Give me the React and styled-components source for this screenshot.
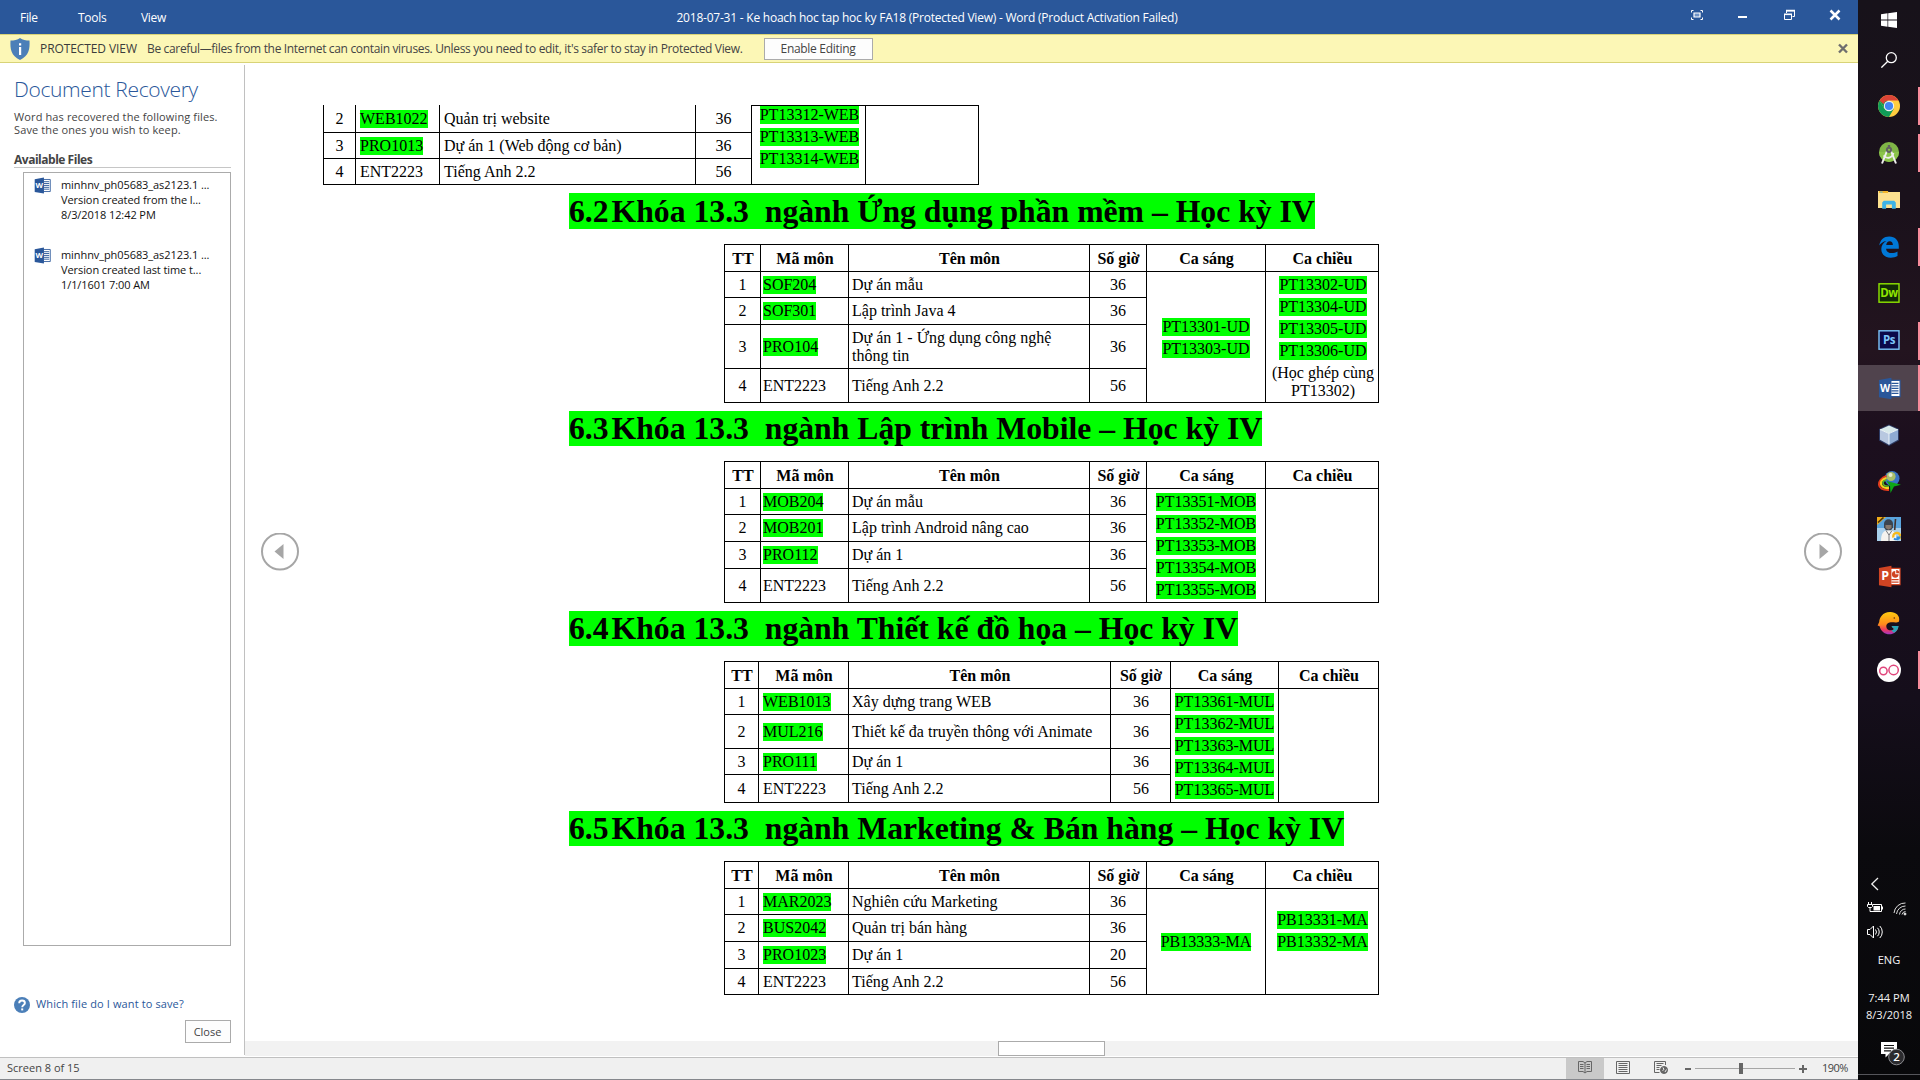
import React from "react";
import styled, { createGlobalStyle } from "styled-components";

const Global = createGlobalStyle`
  * { box-sizing: border-box; }
  body { margin: 0; overflow: hidden; background: #fff; }
`;

const ui = `"Open Sans", "Noto Sans", sans-serif`;
const serif = `"Liberation Serif", "Times New Roman", serif`;

const Screen = styled.div`
  display: flex;
  width: 1920px;
  height: 1080px;
  font-family: ${ui};
  font-size: 12px;
  white-space: nowrap;
`;
const WordWindow = styled.div`
  display: flex;
  flex-direction: column;
  width: 1858px;
  background: #fff;
`;

/* title bar */
const TitleBar = styled.header`
  display: grid;
  grid-template-columns: 1fr auto 1fr;
  height: 34px;
  padding-right: 4px;
  background: #2a579a;
  color: #fff;
  line-height: 36px;
`;
const Menu = styled.nav`
  display: flex;
  padding-left: 20px;
  letter-spacing: -0.3px;
`;
const MenuItem = styled.span`
  width: ${(p) => p.$w}px;
`;
const Title = styled.div`
  letter-spacing: -0.225px;
`;
const WindowButtons = styled.div`
  display: flex;
  justify-content: flex-end;
  padding: 7px 11px 0 0;
  gap: 30px;
`;

/* protected view banner */
const Banner = styled.div`
  display: flex;
  align-items: center;
  height: 29px;
  padding: 0 9px 0 10px;
  background: #fcf7b6;
  border-top: 1px solid #d8d377;
  border-bottom: 1px solid #d8d377;
  color: #444;
`;
const BannerTitle = styled.span`
  width: 107px;
  margin-left: 10px;
  letter-spacing: -0.09px;
  color: #3b3b3b;
`;
const BannerText = styled.span`
  width: 617px;
  letter-spacing: -0.34px;
`;
const PlainButton = styled.button`
  width: ${(p) => p.$w}px;
  height: ${(p) => p.$h}px;
  padding: 0 1px 0 0;
  border: 1px solid #ababab;
  background: #fdfdfd;
  color: #444;
  font: ${(p) => p.$size}px ${ui};
  letter-spacing: ${(p) => p.$ls || 0}px;
`;
const Spacer = styled.div`
  flex: 1;
`;

/* body */
const Body = styled.div`
  display: flex;
  height: 994px;
`;
const Panel = styled.aside`
  display: flex;
  flex-direction: column;
  width: 245px;
  height: 990px;
  margin-top: 2px;
  padding: 9px 13px 0 14px;
  border-right: 1px solid #c0c0c0;
  font-size: 11px;
`;
const PanelTitle = styled.h1`
  margin: 0;
  font-size: 21px;
  font-weight: 300;
  line-height: 30px;
  letter-spacing: -0.35px;
  color: #2a579a;
`;
const PanelNote = styled.p`
  margin: 6px 0 0;
  line-height: 13px;
  letter-spacing: 0.12px;
  color: #444;
`;
const PanelSubtitle = styled.h2`
  height: 20px;
  margin: 12px 0 0;
  border-bottom: 1px solid #c6c6c6;
  font-size: 12px;
  font-weight: 700;
  line-height: 24px;
  letter-spacing: -0.48px;
  color: #444;
`;
const FileList = styled.ul`
  display: flex;
  flex-direction: column;
  gap: 25px;
  height: 774px;
  margin: 4px 0 0 9px;
  padding: 4px 0 0 10px;
  border: 1px solid #ababab;
  list-style: none;
`;
const FileItem = styled.li`
  display: flex;
  gap: 10px;
  line-height: 15px;
  letter-spacing: -0.08px;
  color: #111;
`;
const HelpLink = styled.a`
  display: flex;
  align-items: center;
  gap: 6px;
  height: 16px;
  margin-top: 51px;
  letter-spacing: 0.12px;
  line-height: 14px;
  color: #2a579a;
  & > span { margin-top: -2px; }
`;
const PanelFooter = styled.div`
  display: flex;
  justify-content: flex-end;
  margin-top: 7px;
`;

const Reader = styled.main`
  display: flex;
  flex-direction: column;
  flex: 1;
`;
const Spread = styled.div`
  display: grid;
  grid-template-columns: 78px 1fr 53px;
  align-items: center;
  height: 978px;
  padding-right: 1px;
`;
const PageTurn = styled.div`
  display: flex;
  padding-left: ${(p) => p.$pad}px;
`;
const Page = styled.article`
  align-self: start;
  padding-top: 42px;
  font: 16px/18px ${serif};
  color: #000;
`;
const ScrollTrack = styled.div`
  height: 15px;
  padding-left: 753px;
  background: #f2f2f2;
`;
const ScrollThumb = styled.div`
  width: 107px;
  height: 15px;
  border: 1px solid #ababab;
  background: #fff;
`;

/* document content */
const Heading = styled.h2`
  display: flex;
  width: fit-content;
  height: ${(p) => p.$h || 35}px;
  margin: 8px 0 15px 246px;
  background: #00ff00;
  font-size: 31.69px;
  font-weight: bold;
  line-height: ${(p) => (p.$h ? 37 : 35)}px;
  white-space: pre;
`;
const HeadingNumber = styled.span`
  width: 42.6px;
`;
const Table = styled.div`
  display: grid;
  grid-template-columns: ${(p) => p.$cols};
  grid-template-rows: ${(p) => p.$rows};
  width: fit-content;
  margin-left: ${(p) => (p.$cont ? 0 : 401)}px;
  border-left: 1px solid #000;
  border-top: ${(p) => (p.$cont ? 0 : 1)}px solid #000;
`;
const Cell = styled.div`
  display: flex;
  align-items: center;
  justify-content: ${(p) => (p.$left ? "flex-start" : "center")};
  padding-left: ${(p) => (p.$left ? p.$pad || 3 : p.$nudge || 0)}px;
  padding-top: ${(p) => (p.$head ? 1 : 0)}px;
  border-right: 1px solid #000;
  border-bottom: 1px solid #000;
  font-weight: ${(p) => (p.$head ? "bold" : "normal")};
  white-space: pre;
`;
const SlotCell = styled.div`
  grid-column: ${(p) => p.$col};
  grid-row: ${(p) => (p.$cont ? "1 / -1" : "2 / -1")};
  display: flex;
  flex-direction: column;
  align-items: center;
  justify-content: ${(p) => (p.$top ? "flex-start" : "center")};
  gap: 4px;
  padding-top: ${(p) => p.$pt || 0}px;
  padding-bottom: ${(p) => p.$pb || 0}px;
  padding-left: ${(p) => p.$pl || 0}px;
  border-right: 1px solid #000;
  border-bottom: 1px solid #000;
  border-top: ${(p) => (p.$cont ? 1 : 0)}px solid #000;
  text-align: center;
`;
const Mark = styled.span`
  height: 18px;
  background: #00ff00;
`;
const SlotNote = styled.span`
  white-space: pre;
`;

/* status bar */
const StatusBar = styled.footer`
  display: flex;
  align-items: center;
  height: 23px;
  padding: 0 9px 0 7px;
  border-top: 1px solid #c0c0c0;
  border-bottom: 1px solid #85878c;
  background: #f0f0f0;
  color: #444;
  font-size: 11px;
`;
const StatusText = styled.span`
  margin-top: -2px;
`;
const ViewButton = styled.div`
  display: flex;
  align-items: center;
  justify-content: center;
  width: 38px;
  height: 21px;
  padding: 0 1px 2px 0;
  background: ${(p) => (p.$on ? "#c9c9c9" : "transparent")};
`;
const ZoomValue = styled.span`
  width: 26px;
  margin: -2px 1px 0 12px;
  letter-spacing: -0.5px;
`;

/* taskbar */
const Taskbar = styled.aside`
  display: flex;
  flex-direction: column;
  width: 62px;
  background: linear-gradient(#17121a 0, #1a111b 200px, #23141f 350px, #1c0f1e 440px, #150e1b 700px, #0b0a0e 850px, #08080a 1080px);
  color: #f2f2f2;
`;
const SystemButton = styled.div`
  display: flex;
  align-items: center;
  justify-content: center;
  height: 40px;
`;
const AppList = styled.div`
  display: flex;
  flex-direction: column;
  gap: 1px;
  margin-top: 3px;
`;
const AppButton = styled.div`
  display: grid;
  grid-template-columns: 2px 1fr 2px;
  align-items: center;
  justify-items: center;
  height: 46px;
  background: ${(p) => (p.$active ? "#50434d" : "transparent")};
  &::before { content: ""; }
  &::after {
    content: "";
    width: 2px;
    height: ${(p) => (p.$active ? 46 : 38)}px;
    background: ${(p) => (p.$running || p.$active ? "#f78b9b" : "transparent")};
  }
`;
const Tray = styled.div`
  display: flex;
  flex-direction: column;
  margin-top: 183px;
  font-size: 11px;
`;
const TrayRow = styled.div`
  display: flex;
  height: 16px;
  padding-left: 9px;
  gap: 10px;
  margin-bottom: 8px;
`;
const TrayText = styled.div`
  margin-top: ${(p) => p.$mt || 0}px;
  line-height: 17px;
  text-align: center;
  font-size: 11.1px;
`;
const Notifications = styled.div`
  display: flex;
  height: 34px;
  margin-top: 18px;
  padding-left: 22px;
  border-bottom: 1px solid #55555a;
`;

const WordGlyph = ({ size, color = "#2a579a", letter = "W", ppt }) => (
  <svg width={size} height={size} viewBox="0 0 24 24">
    <path d="M13 3.5h10v17H13z" fill="#fff" stroke={color} strokeWidth="1.2" />
    {ppt ? (
      <g fill={color}>
        <path d="M18 6.2a3.5 3.5 0 1 0 3.5 3.5H18z" />
        <path d="M19 5.2v3.5h3.3A3.4 3.4 0 0 0 19 5.2z" />
        <path d="M14 14.6h7.5v1.4H14zM14 17.2h7.5v1.4H14z" />
      </g>
    ) : (
      <path d="M14 6.6h7.4M14 9.2h7.4M14 11.9h7.4M14 14.6h7.4M14 17.2h7.4" stroke={color} strokeWidth="1.3" />
    )}
    <path d="M1 3 14 .8v22.4L1 21z" fill={color} />
    <text x="7.5" y="16" textAnchor="middle" fontFamily="Open Sans, sans-serif" fontWeight="700" fontSize={ppt ? 13 : 11} fill="#fff">{letter}</text>
  </svg>
);

const AdobeGlyph = ({ text, color, bg }) => (
  <svg width="22" height="24" viewBox="0 0 22 24">
    <rect x="1" y="1.8" width="20" height="18.4" fill={bg} stroke={color} strokeWidth="1.4" />
    <text x="11" y="15.4" textAnchor="middle" fontFamily="Open Sans, sans-serif" fontWeight="700" fontSize="11.5" letterSpacing="-.4" fill={color}>{text}</text>
  </svg>
);

const icons = {
  chrome: (
    <svg width="22" height="22" viewBox="0 0 22 22">
      <circle cx="11" cy="11" r="11" fill="#ffcd40" />
      <path d="M1.5 5.5A11 11 0 0 0 11 22l4.8-8.3L11 11 6.3 13.7z" fill="#0f9d58" />
      <path d="M1.5 5.5 6.3 13.7 11 6z" fill="#0f9d58" />
      <path d="M1.5 5.5A11 11 0 0 1 20.5 5.5H11A5.5 5.5 0 0 0 5.7 9.2z" fill="#db4437" />
      <circle cx="11" cy="11" r="5.2" fill="#f1f1f1" />
      <circle cx="11" cy="11" r="4.1" fill="#4285f4" />
    </svg>
  ),
  studio: (
    <svg width="22" height="24" viewBox="0 0 22 24">
      <circle cx="11" cy="11" r="10" fill="#7fb546" />
      <path d="M1 11a10 10 0 0 0 20 0z" fill="#8bc34a" />
      <path d="M9.4 9 4 22.5M12.6 9 18 22.5" stroke="#eee" strokeWidth="2" />
      <path d="M5.5 14.5c3 3.4 8 3.4 10-2.5" stroke="#eee" strokeWidth="1.8" fill="none" />
      <path d="M9.8 4h2.4v2h-2.4z" fill="#616161" />
      <circle cx="11" cy="8.8" r="3.1" fill="#616161" />
      <circle cx="11" cy="8.8" r="1.1" fill="#8bc34a" />
    </svg>
  ),
  folder: (
    <svg width="22" height="20" viewBox="0 0 22 20">
      <path d="M0 1h9.5l1 1H22v16H0z" fill="#fde18f" />
      <path d="M1 1h9v2H1z" fill="#f2b52b" />
      <path d="M2.2 1.6h2.4v1H2.2z" fill="#5bc0e8" />
      <path d="M4.2 18.8v-6.3l1.6-1.7h10.4l1.6 1.7v6.3h-3.9v-4.4H8.1v4.4z" fill="#3eb3e6" />
    </svg>
  ),
  edge: (
    <svg width="22" height="24" viewBox="0 0 22 24">
      <path d="M1.2 10.6C2.2 4.600 6 1.500 11.200 1.500c6 0 9.600 4.100 9.600 9.700v2.500H8.100c.2 3 2.800 4.400 5.600 4.400 2.200 0 4.100-.6 5.800-1.600v4.600c-1.900 1.100-4.300 1.600-6.700 1.600-5.700 0-9.500-3.300-9.500-8.600 0-3.600 1.700-6.500 5.100-8.200C5 6.400 2.700 8.200 1.200 10.600zM8.200 10h6.700c0-2.500-1.200-3.800-3.200-3.800S8.600 7.700 8.200 10z" fill="#0078d7" />
    </svg>
  ),
  dw: <AdobeGlyph text="Dw" color="#8fe600" bg="#112b07" />,
  ps: <AdobeGlyph text="Ps" color="#7cc5fa" bg="#0b0a4a" />,
  word: <WordGlyph size={23} />,
  cube: (
    <svg width="24" height="24" viewBox="0 0 24 24">
      <path d="M12 1.500 22 6v11.500L12 23 2 17.500V6z" fill="#3c5f9c" opacity=".55" />
      <path d="M12 2.500 21 6.500 12 10.500 3 6.500z" fill="#d8e9ea" />
      <path d="M3 6.500 12 10.500V21.800L3 16.800z" fill="#b8c8e0" />
      <path d="M21 6.500 12 10.500V21.800l9-5z" fill="#8fabd3" />
      <path d="M3 6.500 12 10.500l9-4M12 10.500v11" fill="none" stroke="#f4fafc" strokeWidth=".9" />
    </svg>
  ),
  idm: (
    <svg width="24" height="24" viewBox="0 0 24 24">
      <circle cx="15" cy="8.500" r="7.500" fill="#3974c4" />
      <circle cx="14" cy="6.500" r="4.600" fill="#a9bf6a" />
      <circle cx="13.500" cy="5" r="2" fill="#e7ecd2" />
      <path d="M9.500 6C-1 9.500-1 21 12 20" fill="none" stroke="#e33b1c" strokeWidth="2" />
      <path d="M9.500 8C1.500 10.500 2 18.500 12 18" fill="none" stroke="#f8d21c" strokeWidth="2.200" />
      <path d="M9.500 9.800C4 11.600 5 16.500 12 16.200" fill="none" stroke="#58b82a" strokeWidth="1.600" />
      <path d="M9.500 11 24 14.800l-7 1.800L13.500 23l-.5-7z" fill="#0da817" />
    </svg>
  ),
  game: (
    <svg width="24" height="24" viewBox="0 0 24 24">
      <path d="M0 0h24v24H0z" fill="#5aa4dd" />
      <path d="M0 11h24v13H0z" fill="#a9d0ec" />
      <path d="M0 0h9L0 8z" fill="#f0ac18" />
      <path d="M1 5.500 6.500.5" stroke="#4d3209" strokeWidth="1.600" />
      <path d="M4 24c0-7 2-11 8-11s7 4 8 11z" fill="#f5f3ef" />
      <path d="M7 7c0-6.500 9-6.500 9 0v3.500l-2 2.800H9L7 10.500z" fill="#3b4550" />
      <path d="M8.500 8h6v3l-3 1.800-3-1.800z" fill="#87786c" />
      <path d="M9 13.500 12 18l3-4.500M12 17v7" stroke="#787b80" fill="none" />
      <path d="m18.500 2-.8 11" stroke="#43332e" strokeWidth="1.600" />
      <path d="M16.500 20.500a3.500 3.500 0 1 1 6 1" fill="none" stroke="#f6b91c" strokeWidth="2.300" />
      <path d="M17 21.500a3.500 3.500 0 0 0 5.500-1h-3" fill="none" stroke="#2a8be0" strokeWidth="1.800" />
    </svg>
  ),
  ppt: <WordGlyph size={23} color="#d04423" letter="P" ppt />,
  loop: (
    <svg width="24" height="24" viewBox="0 0 24 24">
      <defs>
        <linearGradient id="loop" x1="0" y1="0" x2="0" y2="1">
          <stop offset="0" stopColor="#ffcb10" />
          <stop offset=".55" stopColor="#ff8a1c" />
          <stop offset=".8" stopColor="#ec3763" />
          <stop offset="1" stopColor="#9d37c8" />
        </linearGradient>
      </defs>
      <path d="M22 10.500C23.500 4.500 18.500.8 13 1 5.500 1.200 2.500 6.500 2.200 11L.6 14.600l2 .6C4 21 9 24 14 23.200c4-.7 7-3.700 7.400-8.200h-6.800l1.600 2.600h1.300c-2 3-8.200 2-8.200-2.200 0-3.400 3.200-4.300 6.200-4.100 2.400.2 5.200.4 6.500-.8z" fill="url(#loop)" />
      <path d="M21.500 15h-7l1.700 2.600h1.400c-.8 1.300-2 1.800-3.300 1.800l2.700 2.400c2.700-1.300 4.300-3.800 4.500-6.800z" fill="#28a5b8" />
      <circle cx="17.300" cy="7" r=".8" fill="#5c3008" />
    </svg>
  ),
  oo: (
    <svg width="24" height="24" viewBox="0 0 24 24">
      <circle cx="12" cy="12" r="12" fill="#fff" />
      <circle cx="6.400" cy="13" r="3.700" fill="none" stroke="#e0457b" strokeWidth="1.500" />
      <circle cx="16.600" cy="12" r="4.700" fill="none" stroke="#e0457b" strokeWidth="1.500" />
    </svg>
  ),
};

const apps = [
  ["chrome", 1], ["studio", 1], ["folder", 0], ["edge", 1], ["dw", 0], ["ps", 1], ["word", 2],
  ["cube", 0], ["idm", 0], ["game", 0], ["ppt", 0], ["loop", 0], ["oo", 1],
];

const HEAD = ["TT", "Mã môn", "Tên môn", "Số giờ", "Ca sáng", "Ca chiều"];

const sections = [
  {
    cont: true,
    codePad: 4,
    cols: "32px 84px 256px 56px 114px 113px",
    rows: "28px 26px 26px",
    data: [
      ["2", "WEB1022", "Quản trị website", "36"],
      ["3", "PRO1013", "Dự án 1 (Web động cơ bản)", "36"],
      ["4", "ENT2223", "Tiếng Anh 2.2", "56"],
    ],
    am: { items: ["PT13312-WEB", "PT13313-WEB", "PT13314-WEB"], top: true, pl: 2 },
    pm: { items: [] },
  },
  {
    num: "6.2",
    title: "Khóa 13.3  ngành Ứng dụng phần mềm – Học kỳ IV",
    h: 36,
    codePad: 2,
    cols: "36px 88px 241px 57px 119px 113px",
    rows: "27px 26px 27px 44px 34px",
    data: [
      ["1", "SOF204", "Dự án mẫu", "36"],
      ["2", "SOF301", "Lập trình Java 4", "36"],
      ["3", "PRO104", "Dự án 1 - Ứng dụng công nghệ\nthông tin", "36"],
      ["4", "ENT2223", "Tiếng Anh 2.2", "56"],
    ],
    am: { items: ["PT13301-UD", "PT13303-UD"], pt: 1 },
    pm: { items: ["PT13302-UD", "PT13304-UD", "PT13305-UD", "PT13306-UD"], note: "(Học ghép cùng\nPT13302)", top: true, pt: 4, pl: 2 },
  },
  {
    num: "6.3",
    title: "Khóa 13.3  ngành Lập trình Mobile – Học kỳ IV",
    codePad: 2,
    cols: "36px 88px 241px 57px 119px 113px",
    rows: "27px 26px 27px 27px 34px",
    data: [
      ["1", "MOB204", "Dự án mẫu", "36"],
      ["2", "MOB201", "Lập trình Android nâng cao", "36"],
      ["3", "PRO112", "Dự án 1", "36"],
      ["4", "ENT2223", "Tiếng Anh 2.2", "56"],
    ],
    am: { items: ["PT13351-MOB", "PT13352-MOB", "PT13353-MOB", "PT13354-MOB", "PT13355-MOB"], top: true, pt: 4 },
    pm: { items: [] },
  },
  {
    num: "6.4",
    title: "Khóa 13.3  ngành Thiết kế đồ họa – Học kỳ IV",
    codePad: 4,
    hoursNudge: 1,
    cols: "34px 90px 262px 60px 108px 100px",
    rows: "27px 26px 34px 26px 28px",
    data: [
      ["1", "WEB1013", "Xây dựng trang WEB", "36"],
      ["2", "MUL216", "Thiết kế đa truyền thông với Animate", "36"],
      ["3", "PRO111", "Dự án 1", "36"],
      ["4", "ENT2223", "Tiếng Anh 2.2", "56"],
    ],
    am: { items: ["PT13361-MUL", "PT13362-MUL", "PT13363-MUL", "PT13364-MUL", "PT13365-MUL"], top: true, pt: 4 },
    pm: { items: [] },
  },
  {
    num: "6.5",
    title: "Khóa 13.3  ngành Marketing & Bán hàng – Học kỳ IV",
    codePad: 4,
    cols: "34px 90px 241px 57px 119px 113px",
    rows: "27px 26px 27px 27px 26px",
    data: [
      ["1", "MAR2023", "Nghiên cứu Marketing", "36"],
      ["2", "BUS2042", "Quản trị bán hàng", "36"],
      ["3", "PRO1023", "Dự án 1", "20"],
      ["4", "ENT2223", "Tiếng Anh 2.2", "56"],
    ],
    am: { items: ["PB13333-MA"] },
    pm: { items: ["PB13331-MA", "PB13332-MA"], pb: 22, pl: 1 },
  },
];

const Slots = ({ slot, col, cont }) => (
  <SlotCell $col={col} $cont={cont} $top={slot.top} $pt={slot.pt} $pb={slot.pb} $pl={slot.pl}>
    {slot.items.map((t) => <Mark key={t}>{t}</Mark>)}
    {slot.note && <SlotNote>{slot.note}</SlotNote>}
  </SlotCell>
);

const Section = ({ s }) => {
  const off = s.cont ? 1 : 2;
  return (
    <section>
      {s.title && (
        <Heading $h={s.h}>
          <HeadingNumber>{s.num}</HeadingNumber>
          <span>{s.title}</span>
        </Heading>
      )}
      <Table $cols={s.cols} $rows={s.rows} $cont={s.cont}>
        {!s.cont && HEAD.map((h) => <Cell key={h} $head $nudge={1}>{h}</Cell>)}
        {s.data.map((r, i) => (
          <React.Fragment key={i}>
            <Cell style={{ gridArea: `${i + off} / 1` }}>{r[0]}</Cell>
            <Cell $left $pad={s.codePad}>{r[1] === "ENT2223" ? r[1] : <Mark>{r[1]}</Mark>}</Cell>
            <Cell $left $pad={s.cont ? 4 : 3}>{r[2]}</Cell>
            <Cell $nudge={s.hoursNudge}>{r[3]}</Cell>
          </React.Fragment>
        ))}
        <Slots slot={s.am} col={5} cont={s.cont} />
        <Slots slot={s.pm} col={6} cont={s.cont} />
      </Table>
    </section>
  );
};

const Arrow = ({ flip }) => (
  <svg width="38" height="38" viewBox="0 0 38 38">
    <circle cx="19" cy="18.500" r="18" fill="#fff" stroke="#a6a6a6" strokeWidth="2" />
    <path d={flip ? "M15.500 11 24.500 18.500l-9 7.500z" : "M22.500 11 13.500 18.500l9 7.500z"} fill="#a6a6a6" />
  </svg>
);

const files = [
  ["minhnv_ph05683_as2123.1 ...", "Version created from the l...", "8/3/2018 12:42 PM"],
  ["minhnv_ph05683_as2123.1 ...", "Version created last time t...", "1/1/1601 7:00 AM"],
];

export default function App() {
  return (
    <Screen>
      <Global />
      <WordWindow>
        <TitleBar>
          <Menu>
            <MenuItem $w={58}>File</MenuItem>
            <MenuItem $w={63}>Tools</MenuItem>
            <MenuItem $w={40}>View</MenuItem>
          </Menu>
          <Title>2018-07-31 - Ke hoach hoc tap hoc ky FA18 (Protected View) - Word (Product Activation Failed)</Title>
          <WindowButtons>
            <svg width="16" height="16" viewBox="0 0 16 16" fill="none" stroke="#fff">
              <path d="M2.500 5.500v-2h2M11.500 3.500h2v2M13.500 10.500v2h-2M4.500 12.500h-2v-2" />
              <path d="M5 6h6v4H5z" fill="#6f93c7" strokeWidth="1.200" />
            </svg>
            <svg width="16" height="16" viewBox="0 0 16 16"><path d="M3 9h9v2H3z" fill="#fff" /></svg>
            <svg width="16" height="16" viewBox="0 0 16 16" fill="none" stroke="#fff">
              <path d="M5.500 6V4h8v5.500h-2" /><path d="M5 3.500h9" strokeWidth="1.500" />
              <path d="M3.500 7.500h7v5h-7z" /><path d="M3 7.300h8" strokeWidth="1.600" />
            </svg>
            <svg width="16" height="16" viewBox="0 0 16 16"><path d="m3.500 3.500 9 9m0-9-9 9" stroke="#fff" strokeWidth="2.500" /></svg>
          </WindowButtons>
        </TitleBar>

        <Banner>
          <svg width="20" height="22" viewBox="0 0 20 22">
            <path d="M10 0c2.500 2 6 2.600 9.500 2.600C20 11 19 18 10 22 1 18 0 11 .5 2.600 4 2.600 7.500 2 10 0z" fill="#4b7fb8" />
            <path d="M9 9h2.200v8H9zM9 5.200h2.200v2.300H9z" fill="#fff" />
          </svg>
          <BannerTitle>PROTECTED VIEW</BannerTitle>
          <BannerText>Be careful—files from the Internet can contain viruses. Unless you need to edit, it's safer to stay in Protected View.</BannerText>
          <PlainButton $w={109} $h={22} $size={12} $ls={-0.3}>Enable Editing</PlainButton>
          <Spacer />
          <svg width="12" height="12" viewBox="0 0 12 12"><path d="m2 1.500 8 8m0-8-8 8" stroke="#6e6e6e" strokeWidth="2.400" /></svg>
        </Banner>

        <Body>
          <Panel>
            <PanelTitle>Document Recovery</PanelTitle>
            <PanelNote>Word has recovered the following files.<br />Save the ones you wish to keep.</PanelNote>
            <PanelSubtitle>Available Files</PanelSubtitle>
            <FileList>
              {files.map((f) => (
                <FileItem key={f[1]}>
                  <WordGlyph size={17} />
                  <div>{f[0]}<br />{f[1]}<br />{f[2]}</div>
                </FileItem>
              ))}
            </FileList>
            <HelpLink>
              <svg width="16" height="16" viewBox="0 0 16 16">
                <circle cx="8" cy="8" r="8" fill="#4b7fb8" />
                <path d="M5.200 6.200c0-3.600 5.700-3.400 5.700-.2C10.900 8 8.200 8 8.200 10.200" fill="none" stroke="#fff" strokeWidth="1.900" />
                <path d="M7.200 11.400h2v2h-2z" fill="#fff" />
              </svg>
              <span>Which file do I want to save?</span>
            </HelpLink>
            <PanelFooter><PlainButton $w={46} $h={23} $size={11}>Close</PlainButton></PanelFooter>
          </Panel>

          <Reader>
            <Spread>
              <PageTurn $pad={16}><Arrow /></PageTurn>
              <Page>{sections.map((s, i) => <Section key={i} s={s} />)}</Page>
              <PageTurn $pad={0}><Arrow flip /></PageTurn>
            </Spread>
            <ScrollTrack><ScrollThumb /></ScrollTrack>
          </Reader>
        </Body>

        <StatusBar>
          <StatusText>Screen 8 of 15</StatusText>
          <Spacer />
          <ViewButton $on>
            <svg width="14" height="13" viewBox="0 0 14 13" fill="none" stroke="#666">
              <path d="M.5.500h4.500L7 2 9 .5h4.500v10H9L7 12 5 10.500H.5zM7 2v10" />
              <path d="M2 3.500h3.500M2 5.500h3.500M2 7.500h3.500M8.500 3.500H12M8.500 5.500H12M8.500 7.500H12" />
            </svg>
          </ViewButton>
          <ViewButton>
            <svg width="14" height="13" viewBox="0 0 14 13" fill="none" stroke="#666">
              <path d="M.5.500h13v12H.5zM2.500 2.500h9M2.500 4.500h9M2.500 6.500h9M2.500 8.500h9M2.500 10.500h9" />
            </svg>
          </ViewButton>
          <ViewButton>
            <svg width="14" height="13" viewBox="0 0 14 13" fill="none" stroke="#666">
              <path d="M11.500 4V.5H.5v11h5M2.500 2.500h7M2.500 4.500h5M2.500 6.500h3M2.500 8.500h3" />
              <circle cx="10" cy="9" r="3.500" fill="#666" />
              <path d="m9 6.500 1 2-1.500 1M11 11l1.500-2.500" stroke="#eee" />
            </svg>
          </ViewButton>
          <svg width="130" height="20" viewBox="0 0 130 20">
            <path d="M5 9h6v2H5zM119 9h8v2h-8zM122 6h2v8h-2z" fill="#666" />
            <path d="M15 9.500h100" stroke="#a6a6a6" />
            <path d="M59 4h4v11h-4z" fill="#666" />
          </svg>
          <ZoomValue>190%</ZoomValue>
        </StatusBar>
      </WordWindow>

      <Taskbar>
        <SystemButton>
          <svg width="16" height="16" viewBox="0 0 16 16" fill="#fff">
            <path d="M0 2.300 6.500 1.300v6.300H0zM7.200 1.200 16 0v7.600H7.200zM0 8.400h6.500v6.300L0 13.800zM7.200 8.400H16V16l-8.800-1.200z" />
          </svg>
        </SystemButton>
        <SystemButton>
          <svg width="16" height="16" viewBox="0 0 16 16" fill="none" stroke="#fff" strokeWidth="1.300">
            <circle cx="10.300" cy="5.700" r="5" /><path d="M6.800 9.300.4 15.600" />
          </svg>
        </SystemButton>
        <AppList>
          {apps.map(([k, st]) => (
            <AppButton key={k} $running={st === 1} $active={st === 2}>{icons[k]}</AppButton>
          ))}
        </AppList>
        <Tray>
          <TrayRow>
            <svg width="16" height="16" viewBox="0 0 16 16"><path d="M11 2 4.800 8l6.200 6" fill="none" stroke="#eee" strokeWidth="1.300" /></svg>
          </TrayRow>
          <TrayRow>
            <svg width="16" height="16" viewBox="0 0 16 16" fill="none" stroke="#fff">
              <path d="M6 4.500h8.500v7H5M15.500 6.500v3" />
              <path d="M6.500 6h6.500v4.500H6.500z" fill="#fff" stroke="none" />
              <path d="M1.500 2v2M4.500 2v2M.5 4.500h5v2l-1 1h-3l-1-1zM3 7.500v4h2" />
            </svg>
            <svg width="14" height="16" viewBox="0 0 14 16" fill="none" stroke="#ddd">
              <path d="M1 13A11 11 0 0 1 12.500 3M3.500 14A9 9 0 0 1 12.500 6M6.500 14.500a6 6 0 0 1 6-5.500M9 14.500a4 4 0 0 1 3.500-3" />
              <circle cx="12" cy="14" r="1" fill="#fff" />
            </svg>
          </TrayRow>
          <TrayRow>
            <svg width="17" height="16" viewBox="0 0 17 16" fill="none" stroke="#fff">
              <path d="M.5 5.500h2.500l3.500-3.500v12L3 10.500H.5z" />
              <path d="M8.500 5.500a4 4 0 0 1 0 5M10.500 3.800a6 6 0 0 1 0 8.400M12.800 2a8.500 8.500 0 0 1 0 12" />
            </svg>
          </TrayRow>
          <TrayText $mt={3}>ENG</TrayText>
          <TrayText $mt={21}>7:44 PM</TrayText>
          <TrayText>8/3/2018</TrayText>
          <Notifications>
            <svg width="27" height="26" viewBox="0 0 27 26">
              <path d="M1 1h16v12H9l-3.500 3.500V13H1z" fill="#fff" />
              <path d="M4 4.500h10M4 7.200h10M4 9.900h7" stroke="#111" strokeWidth="1.200" />
              <circle cx="16.500" cy="16" r="7.800" fill="#2b2b2e" stroke="#8a8a8e" />
              <text x="16.500" y="20.200" textAnchor="middle" fontFamily="Open Sans, sans-serif" fontWeight="600" fontSize="11.500" fill="#fff">2</text>
            </svg>
          </Notifications>
        </Tray>
      </Taskbar>
    </Screen>
  );
}
